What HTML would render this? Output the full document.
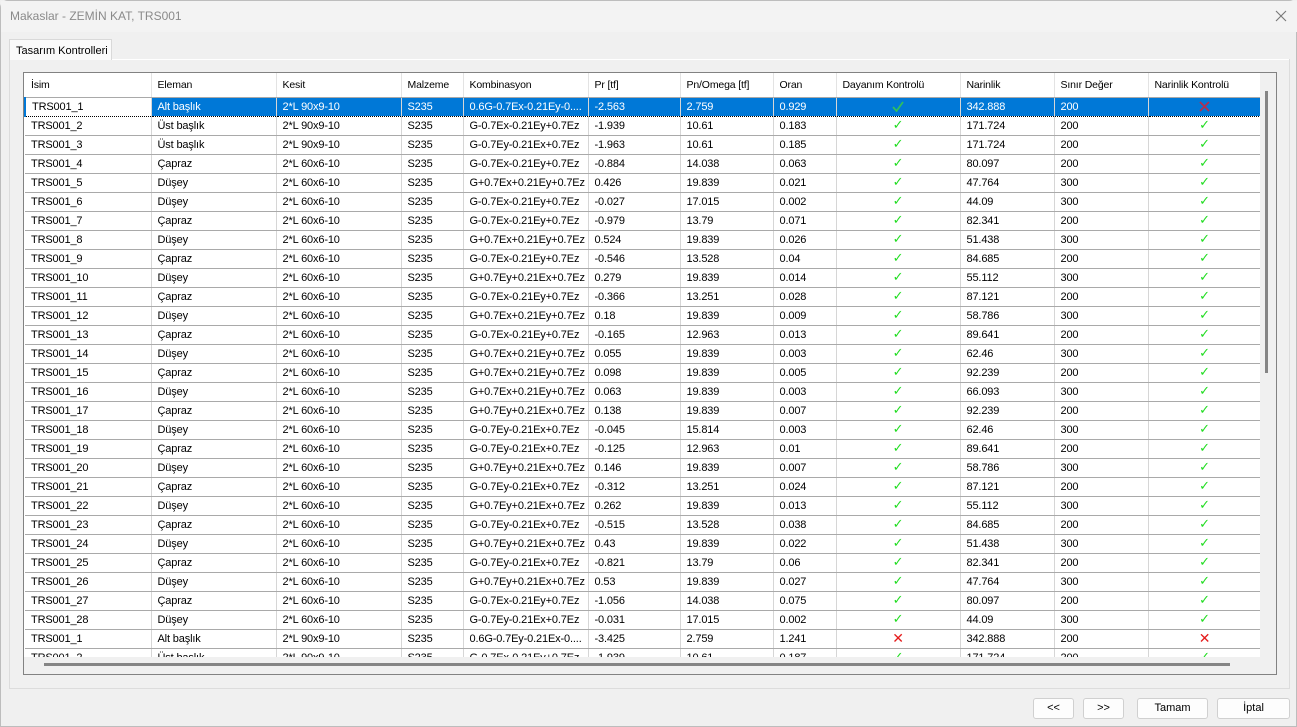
<!DOCTYPE html>
<html><head><meta charset="utf-8"><style>
*{box-sizing:border-box;margin:0;padding:0}
body{width:1297px;height:727px;background:#f0f0f0;font-family:"Liberation Sans",sans-serif;position:relative;overflow:hidden;border:1px solid #bdbdbd;border-radius:8px 8px 0 0}
.title{position:absolute;left:0;top:0;width:1297px;height:31px;background:#f3f3f3}
.title span{position:absolute;left:9px;top:8px;font-size:12px;color:#8a8a8a}
.close{position:absolute;left:1274px;top:9px}
.tab{position:absolute;left:8px;top:38px;width:103px;height:21px;background:#fafafa;border:1px solid #d9d9d9;border-bottom:none;font-size:11px;padding:5px 0 0 6px;color:#000;z-index:2}
.panel{position:absolute;left:8px;top:58px;width:1281px;height:630px;background:#f0f0f0;border:1px solid #dcdcdc;border-top:none;box-shadow:inset 0 1px 0 #fff}
.grid{position:absolute;left:22px;top:71px;width:1254px;height:603px;border:1px solid #828282;background:#f0f0f0;overflow:hidden}
.data{position:absolute;left:0;top:0;width:1236px;height:584px;background:#fff;overflow:hidden}
table{border-collapse:collapse;table-layout:fixed;width:1236px;font-size:11px;color:#000;letter-spacing:-0.15px}
td,th{height:19px;border-right:1px solid #d6d6d6;border-bottom:1px solid #a9a9a9;padding:0 0 0 6px;white-space:nowrap;overflow:hidden;text-align:left;font-weight:normal}
th{height:24px;font-size:10.5px;border-bottom:1px solid #a9a9a9;border-right:1px solid #e3e3e3;padding-left:6px}
td.c{text-align:center;padding:0}
tr.sel td{background:#0078d7;color:#fff;border-bottom:1px dotted #000;border-top:1px dotted #000}
tr.sel td:first-child{background:#fff;color:#000;border-left:2px solid #0078d7}
.vs{position:absolute;left:1241px;top:18px;width:3px;height:282px;background:#858585}
.hs{position:absolute;left:20px;top:590px;width:1186px;height:3px;background:#858585}
.btn{position:absolute;top:697px;height:21px;background:#fdfdfd;border:1px solid #d0d0d0;border-radius:3px;font-size:11px;text-align:center;line-height:19px}
svg.k{display:block;margin:0 auto}
td.c{color:#22dd22;font-weight:bold;font-size:13px;font-family:"DejaVu Sans",sans-serif}td.x{color:#e51b1b;font-size:14px}
</style></head><body>
<div class="title"><span>Makaslar - ZEMİN KAT, TRS001</span>
<svg class="close" width="12" height="12"><path d="M1 1L11 11M11 1L1 11" stroke="#777" stroke-width="1.1"/></svg></div>
<div class="tab">Tasarım Kontrolleri</div>
<div class="panel"></div>
<div class="grid"><div class="data"><table>
<colgroup><col style="width:126px"><col style="width:125px"><col style="width:125px"><col style="width:62px"><col style="width:125px"><col style="width:92px"><col style="width:93px"><col style="width:63px"><col style="width:124px"><col style="width:94px"><col style="width:94px"><col style="width:113px"></colgroup>
<tr><th>İsim</th><th>Eleman</th><th>Kesit</th><th>Malzeme</th><th>Kombinasyon</th><th>Pr [tf]</th><th>Pn/Omega [tf]</th><th>Oran</th><th>Dayanım Kontrolü</th><th>Narinlik</th><th>Sınır Değer</th><th>Narinlik Kontrolü</th></tr>
<tr class="sel"><td>TRS001_1</td><td>Alt başlık</td><td>2*L 90x9-10</td><td>S235</td><td>0.6G-0.7Ex-0.21Ey-0....</td><td>-2.563</td><td>2.759</td><td>0.929</td><td class="c"><svg class="k" width="12" height="11"><path d="M1 6L4.5 10L11 1" stroke="#2fbf5f" stroke-width="1.8" fill="none"/></svg></td><td>342.888</td><td>200</td><td class="c"><svg class="k" width="11" height="11"><path d="M1 1L10 10M10 1L1 10" stroke="#b03050" stroke-width="1.8"/></svg></td></tr>
<tr><td>TRS001_2</td><td>Üst başlık</td><td>2*L 90x9-10</td><td>S235</td><td>G-0.7Ex-0.21Ey+0.7Ez</td><td>-1.939</td><td>10.61</td><td>0.183</td><td class="c">✓</td><td>171.724</td><td>200</td><td class="c">✓</td></tr>
<tr><td>TRS001_3</td><td>Üst başlık</td><td>2*L 90x9-10</td><td>S235</td><td>G-0.7Ey-0.21Ex+0.7Ez</td><td>-1.963</td><td>10.61</td><td>0.185</td><td class="c">✓</td><td>171.724</td><td>200</td><td class="c">✓</td></tr>
<tr><td>TRS001_4</td><td>Çapraz</td><td>2*L 60x6-10</td><td>S235</td><td>G-0.7Ex-0.21Ey+0.7Ez</td><td>-0.884</td><td>14.038</td><td>0.063</td><td class="c">✓</td><td>80.097</td><td>200</td><td class="c">✓</td></tr>
<tr><td>TRS001_5</td><td>Düşey</td><td>2*L 60x6-10</td><td>S235</td><td>G+0.7Ex+0.21Ey+0.7Ez</td><td>0.426</td><td>19.839</td><td>0.021</td><td class="c">✓</td><td>47.764</td><td>300</td><td class="c">✓</td></tr>
<tr><td>TRS001_6</td><td>Düşey</td><td>2*L 60x6-10</td><td>S235</td><td>G-0.7Ex-0.21Ey+0.7Ez</td><td>-0.027</td><td>17.015</td><td>0.002</td><td class="c">✓</td><td>44.09</td><td>300</td><td class="c">✓</td></tr>
<tr><td>TRS001_7</td><td>Çapraz</td><td>2*L 60x6-10</td><td>S235</td><td>G-0.7Ex-0.21Ey+0.7Ez</td><td>-0.979</td><td>13.79</td><td>0.071</td><td class="c">✓</td><td>82.341</td><td>200</td><td class="c">✓</td></tr>
<tr><td>TRS001_8</td><td>Düşey</td><td>2*L 60x6-10</td><td>S235</td><td>G+0.7Ex+0.21Ey+0.7Ez</td><td>0.524</td><td>19.839</td><td>0.026</td><td class="c">✓</td><td>51.438</td><td>300</td><td class="c">✓</td></tr>
<tr><td>TRS001_9</td><td>Çapraz</td><td>2*L 60x6-10</td><td>S235</td><td>G-0.7Ex-0.21Ey+0.7Ez</td><td>-0.546</td><td>13.528</td><td>0.04</td><td class="c">✓</td><td>84.685</td><td>200</td><td class="c">✓</td></tr>
<tr><td>TRS001_10</td><td>Düşey</td><td>2*L 60x6-10</td><td>S235</td><td>G+0.7Ey+0.21Ex+0.7Ez</td><td>0.279</td><td>19.839</td><td>0.014</td><td class="c">✓</td><td>55.112</td><td>300</td><td class="c">✓</td></tr>
<tr><td>TRS001_11</td><td>Çapraz</td><td>2*L 60x6-10</td><td>S235</td><td>G-0.7Ex-0.21Ey+0.7Ez</td><td>-0.366</td><td>13.251</td><td>0.028</td><td class="c">✓</td><td>87.121</td><td>200</td><td class="c">✓</td></tr>
<tr><td>TRS001_12</td><td>Düşey</td><td>2*L 60x6-10</td><td>S235</td><td>G+0.7Ex+0.21Ey+0.7Ez</td><td>0.18</td><td>19.839</td><td>0.009</td><td class="c">✓</td><td>58.786</td><td>300</td><td class="c">✓</td></tr>
<tr><td>TRS001_13</td><td>Çapraz</td><td>2*L 60x6-10</td><td>S235</td><td>G-0.7Ex-0.21Ey+0.7Ez</td><td>-0.165</td><td>12.963</td><td>0.013</td><td class="c">✓</td><td>89.641</td><td>200</td><td class="c">✓</td></tr>
<tr><td>TRS001_14</td><td>Düşey</td><td>2*L 60x6-10</td><td>S235</td><td>G+0.7Ex+0.21Ey+0.7Ez</td><td>0.055</td><td>19.839</td><td>0.003</td><td class="c">✓</td><td>62.46</td><td>300</td><td class="c">✓</td></tr>
<tr><td>TRS001_15</td><td>Çapraz</td><td>2*L 60x6-10</td><td>S235</td><td>G+0.7Ex+0.21Ey+0.7Ez</td><td>0.098</td><td>19.839</td><td>0.005</td><td class="c">✓</td><td>92.239</td><td>200</td><td class="c">✓</td></tr>
<tr><td>TRS001_16</td><td>Düşey</td><td>2*L 60x6-10</td><td>S235</td><td>G+0.7Ex+0.21Ey+0.7Ez</td><td>0.063</td><td>19.839</td><td>0.003</td><td class="c">✓</td><td>66.093</td><td>300</td><td class="c">✓</td></tr>
<tr><td>TRS001_17</td><td>Çapraz</td><td>2*L 60x6-10</td><td>S235</td><td>G+0.7Ey+0.21Ex+0.7Ez</td><td>0.138</td><td>19.839</td><td>0.007</td><td class="c">✓</td><td>92.239</td><td>200</td><td class="c">✓</td></tr>
<tr><td>TRS001_18</td><td>Düşey</td><td>2*L 60x6-10</td><td>S235</td><td>G-0.7Ey-0.21Ex+0.7Ez</td><td>-0.045</td><td>15.814</td><td>0.003</td><td class="c">✓</td><td>62.46</td><td>300</td><td class="c">✓</td></tr>
<tr><td>TRS001_19</td><td>Çapraz</td><td>2*L 60x6-10</td><td>S235</td><td>G-0.7Ey-0.21Ex+0.7Ez</td><td>-0.125</td><td>12.963</td><td>0.01</td><td class="c">✓</td><td>89.641</td><td>200</td><td class="c">✓</td></tr>
<tr><td>TRS001_20</td><td>Düşey</td><td>2*L 60x6-10</td><td>S235</td><td>G+0.7Ey+0.21Ex+0.7Ez</td><td>0.146</td><td>19.839</td><td>0.007</td><td class="c">✓</td><td>58.786</td><td>300</td><td class="c">✓</td></tr>
<tr><td>TRS001_21</td><td>Çapraz</td><td>2*L 60x6-10</td><td>S235</td><td>G-0.7Ey-0.21Ex+0.7Ez</td><td>-0.312</td><td>13.251</td><td>0.024</td><td class="c">✓</td><td>87.121</td><td>200</td><td class="c">✓</td></tr>
<tr><td>TRS001_22</td><td>Düşey</td><td>2*L 60x6-10</td><td>S235</td><td>G+0.7Ey+0.21Ex+0.7Ez</td><td>0.262</td><td>19.839</td><td>0.013</td><td class="c">✓</td><td>55.112</td><td>300</td><td class="c">✓</td></tr>
<tr><td>TRS001_23</td><td>Çapraz</td><td>2*L 60x6-10</td><td>S235</td><td>G-0.7Ey-0.21Ex+0.7Ez</td><td>-0.515</td><td>13.528</td><td>0.038</td><td class="c">✓</td><td>84.685</td><td>200</td><td class="c">✓</td></tr>
<tr><td>TRS001_24</td><td>Düşey</td><td>2*L 60x6-10</td><td>S235</td><td>G+0.7Ey+0.21Ex+0.7Ez</td><td>0.43</td><td>19.839</td><td>0.022</td><td class="c">✓</td><td>51.438</td><td>300</td><td class="c">✓</td></tr>
<tr><td>TRS001_25</td><td>Çapraz</td><td>2*L 60x6-10</td><td>S235</td><td>G-0.7Ey-0.21Ex+0.7Ez</td><td>-0.821</td><td>13.79</td><td>0.06</td><td class="c">✓</td><td>82.341</td><td>200</td><td class="c">✓</td></tr>
<tr><td>TRS001_26</td><td>Düşey</td><td>2*L 60x6-10</td><td>S235</td><td>G+0.7Ey+0.21Ex+0.7Ez</td><td>0.53</td><td>19.839</td><td>0.027</td><td class="c">✓</td><td>47.764</td><td>300</td><td class="c">✓</td></tr>
<tr><td>TRS001_27</td><td>Çapraz</td><td>2*L 60x6-10</td><td>S235</td><td>G-0.7Ex-0.21Ey+0.7Ez</td><td>-1.056</td><td>14.038</td><td>0.075</td><td class="c">✓</td><td>80.097</td><td>200</td><td class="c">✓</td></tr>
<tr><td>TRS001_28</td><td>Düşey</td><td>2*L 60x6-10</td><td>S235</td><td>G-0.7Ey-0.21Ex+0.7Ez</td><td>-0.031</td><td>17.015</td><td>0.002</td><td class="c">✓</td><td>44.09</td><td>300</td><td class="c">✓</td></tr>
<tr><td>TRS001_1</td><td>Alt başlık</td><td>2*L 90x9-10</td><td>S235</td><td>0.6G-0.7Ey-0.21Ex-0....</td><td>-3.425</td><td>2.759</td><td>1.241</td><td class="c x">✕</td><td>342.888</td><td>200</td><td class="c x">✕</td></tr>
<tr><td>TRS001_2</td><td>Üst başlık</td><td>2*L 90x9-10</td><td>S235</td><td>G-0.7Ex-0.21Ey+0.7Ez</td><td>-1.939</td><td>10.61</td><td>0.187</td><td class="c">✓</td><td>171.724</td><td>200</td><td class="c">✓</td></tr>
</table></div>
<div class="vs"></div><div class="hs"></div></div>
<div class="btn" style="left:1032px;width:41px">&lt;&lt;</div>
<div class="btn" style="left:1082px;width:41px">&gt;&gt;</div>
<div class="btn" style="left:1136px;width:71px">Tamam</div>
<div class="btn" style="left:1216px;width:73px">İptal</div>
</body></html>
